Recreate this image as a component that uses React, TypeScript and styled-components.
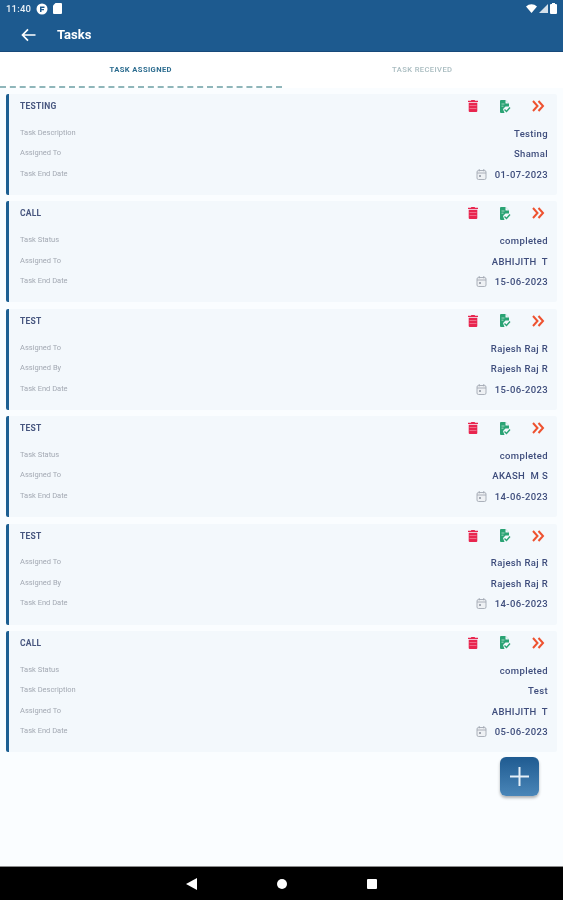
import React from "react";
import styled, { createGlobalStyle } from "styled-components";

const Global = createGlobalStyle`
  html, body { margin: 0; padding: 0; height: 100%; background: #fafdff; }
  #root { height: 100%; }
  * { box-sizing: border-box; }
`;
const Screen = styled.div`
  width: 563px; height: 900px; display: flex; flex-direction: column; position: relative; overflow: hidden;
  background: #fafdff; font-family: Roboto, "Liberation Sans", sans-serif; filter: blur(.4px);
`;
const Header = styled.header`
  height: 52px; flex: none; background: #1d5a8f; border-bottom: 1px solid #17497a; box-shadow: 0 1px 0 #8fb2cf;
  display: flex; flex-direction: column; color: #fff;
`;
const StatusBar = styled.div`
  height: 18px; display: flex; align-items: center; justify-content: space-between; padding: 0 6px;
`;
const StatusGroup = styled.div<{ $tight?: boolean }>`
  display: flex; align-items: center; gap: ${(p) => (p.$tight ? 2 : 5)}px;
`;
const Time = styled.span`
  font-size: 9.500px; font-weight: 500; letter-spacing: .2px; color: #e6eef5;
`;
const TitleBar = styled.div`
  height: 34px; display: flex; align-items: center; padding: 1px 0 0 21px; gap: 21px;
`;
const Title = styled.h1`
  margin: 0; font-size: 13px; font-weight: 700; line-height: 1;
`;
const Tabs = styled.nav`
  height: 36px; flex: none; display: flex; background: #fff;
`;
const Tab = styled.div<{ $active?: boolean }>`
  width: 50%; display: flex; align-items: center; justify-content: center; padding-top: 1px;
  font-size: 7.600px; font-weight: ${(p) => (p.$active ? 700 : 500)}; letter-spacing: .4px;
  color: ${(p) => (p.$active ? "#2c6c8f" : "#a9bcc0")};
  border-bottom: 2px dashed ${(p) => (p.$active ? "#8fb6ba" : "transparent")};
`;
const List = styled.main`
  display: flex; flex-direction: column; gap: 6.400px; padding: 6px 6px 0 6px;
`;
const Card = styled.article`
  display: flex; flex-direction: column; background: #f3f8fc; border-left: 3px solid #1d5f92; border-radius: 2px;
  padding: 3.500px 0 11.500px 11px;
`;
const CardHead = styled.div`
  height: 17px; display: flex; align-items: center; justify-content: space-between; margin-bottom: 7.500px;
`;
const CardTitle = styled.h2`
  margin: 0; font-size: 8.500px; font-weight: 700; color: #47567f; letter-spacing: .25px;
`;
const Actions = styled.div`
  display: flex; align-items: center; gap: 21px; padding-right: 12px;
`;
const Row = styled.div`
  height: 20.500px; display: flex; align-items: center; justify-content: space-between; padding-right: 9px;
`;
const Label = styled.span`
  font-size: 7.500px; color: #a3a9b3;
`;
const Value = styled.span`
  display: flex; align-items: center; gap: 8px; font-size: 9.500px; font-weight: 500; color: #3e4d7c; letter-spacing: .35px;
  white-space: pre; position: relative; top: 1px;
`;
const Fab = styled.button`
  position: absolute; left: 500px; top: 757px; width: 39px; height: 39px; border: 0; padding: 0; border-radius: 6px;
  background: linear-gradient(180deg, #1f5b91 0%, #4a86b8 100%); box-shadow: 0 2px 3px rgba(0,0,0,.3);
  display: flex; align-items: center; justify-content: center;
`;
const NavBar = styled.footer`
  position: absolute; left: 0; right: 0; bottom: 0; height: 34px; background: #000; border-top: 1px solid #8c8c8c;
  display: flex; align-items: center; justify-content: center; gap: 80px;
`;

const Trash = () => (
  <svg width="10" height="12" viewBox="0 0 10 12"><path fill="#e8264f" d="M3.400 0h3.200l.6.8H10V2H0V.8h2.800zM.7 2.800h8.600V11a1 1 0 0 1-1 1H1.700a1 1 0 0 1-1-1z"/><path stroke="#f58aa0" strokeWidth=".7" d="M1.500 5.500h7M1.500 8.500h7"/></svg>
);
const Doc = () => (
  <svg width="12" height="13" viewBox="0 0 12 13"><path fill="#2aa374" d="M2 0h4.500L10 3.500V6.500H6.500L4 9l1.500 4H2a1 1 0 0 1-1-1V1a1 1 0 0 1 1-1z"/><path fill="#f3f8fc" d="M6.500 0v3.500H10z"/><path fill="none" stroke="#2aa374" strokeWidth="1.400" d="M5.500 9.500l2 2 3.500-4"/><path stroke="#bfe5d5" strokeWidth=".8" d="M2.500 4h3M2.500 6.200h2"/></svg>
);
const Chevrons = () => (
  <svg width="13" height="12" viewBox="0 0 13 12"><path fill="none" stroke="#ee5230" strokeWidth="2" d="M1 1l4.500 5L1 11M6.500 1L11 6l-4.500 5"/></svg>
);
const Calendar = () => (
  <svg width="11" height="11" viewBox="0 0 11 11"><rect x="1" y="1.500" width="9" height="9" rx="1.500" fill="#eef1f4" stroke="#a3a9b3" strokeWidth=".9"/><path stroke="#a3a9b3" strokeWidth=".9" d="M1 4h9M3.200 0v2.400M7.800 0v2.400"/><rect x="3" y="6" width="2" height="2" fill="#a3a9b3"/></svg>
);

type Task = { title: string; rows: [string, string][]; date: string };
const tasks: Task[] = [
  { title: "TESTING", rows: [["Task Description", "Testing"], ["Assigned To", "Shamal"]], date: "01-07-2023" },
  { title: "CALL", rows: [["Task Status", "completed"], ["Assigned To", "ABHIJITH  T"]], date: "15-06-2023" },
  { title: "TEST", rows: [["Assigned To", "Rajesh Raj R"], ["Assigned By", "Rajesh Raj R"]], date: "15-06-2023" },
  { title: "TEST", rows: [["Task Status", "completed"], ["Assigned To", "AKASH  M S"]], date: "14-06-2023" },
  { title: "TEST", rows: [["Assigned To", "Rajesh Raj R"], ["Assigned By", "Rajesh Raj R"]], date: "14-06-2023" },
  { title: "CALL", rows: [["Task Status", "completed"], ["Task Description", "Test"], ["Assigned To", "ABHIJITH  T"]], date: "05-06-2023" },
];

export default function App() {
  return (
    <Screen>
      <Global />
      <Header>
        <StatusBar>
          <StatusGroup>
            <Time>11:40</Time>
            <svg width="12" height="12" viewBox="0 0 12 12"><circle cx="6" cy="6" r="5.500" fill="#fff"/><path fill="#1d5a8f" d="M4 3.500h4.500V5H5.500v1H8v1.200H5.500V9H4z"/></svg>
            <svg width="9" height="11" viewBox="0 0 9 11"><path fill="#fff" d="M2.500 0H8a1 1 0 0 1 1 1v9a1 1 0 0 1-1 1H1a1 1 0 0 1-1-1V2.500z"/></svg>
          </StatusGroup>
          <StatusGroup $tight>
            <svg width="11" height="9" viewBox="0 0 11 9"><path fill="#fff" d="M0 2.500a8 8 0 0 1 11 0L5.500 9z"/></svg>
            <svg width="9" height="9" viewBox="0 0 9 9"><path fill="#d5e0ea" d="M9 0v9H0z"/></svg>
            <svg width="7" height="11" viewBox="0 0 7 11"><path fill="#fff" d="M2 0h3v1h1a1 1 0 0 1 1 1v8a1 1 0 0 1-1 1H1a1 1 0 0 1-1-1V2a1 1 0 0 1 1-1h1z"/></svg>
          </StatusGroup>
        </StatusBar>
        <TitleBar>
          <svg width="15" height="14" viewBox="0 0 15 14"><path fill="none" stroke="#fff" strokeWidth="1.700" d="M14.500 7H1.500M7 1.300L1.500 7 7 12.700"/></svg>
          <Title>Tasks</Title>
        </TitleBar>
      </Header>
      <Tabs>
        <Tab $active>TASK ASSIGNED</Tab>
        <Tab>TASK RECEIVED</Tab>
      </Tabs>
      <List>
        {tasks.map((t, i) => (
          <Card key={i}>
            <CardHead>
              <CardTitle>{t.title}</CardTitle>
              <Actions>
                <Trash />
                <Doc />
                <Chevrons />
              </Actions>
            </CardHead>
            {t.rows.map(([l, v]) => (
              <Row key={l}>
                <Label>{l}</Label>
                <Value>{v}</Value>
              </Row>
            ))}
            <Row>
              <Label>Task End Date</Label>
              <Value><Calendar />{t.date}</Value>
            </Row>
          </Card>
        ))}
      </List>
      <Fab aria-label="Add">
        <svg width="19" height="19" viewBox="0 0 19 19"><path stroke="#e6f0f8" strokeWidth="2" d="M9.500 0v19M0 9.500h19"/></svg>
      </Fab>
      <NavBar>
        <svg width="11" height="12" viewBox="0 0 11 12"><path fill="#fff" d="M11 0v12L0 6z"/></svg>
        <svg width="10" height="10" viewBox="0 0 10 10"><circle cx="5" cy="5" r="5" fill="#fff"/></svg>
        <svg width="10" height="10" viewBox="0 0 10 10"><rect width="10" height="10" rx="1" fill="#fff"/></svg>
      </NavBar>
    </Screen>
  );
}
